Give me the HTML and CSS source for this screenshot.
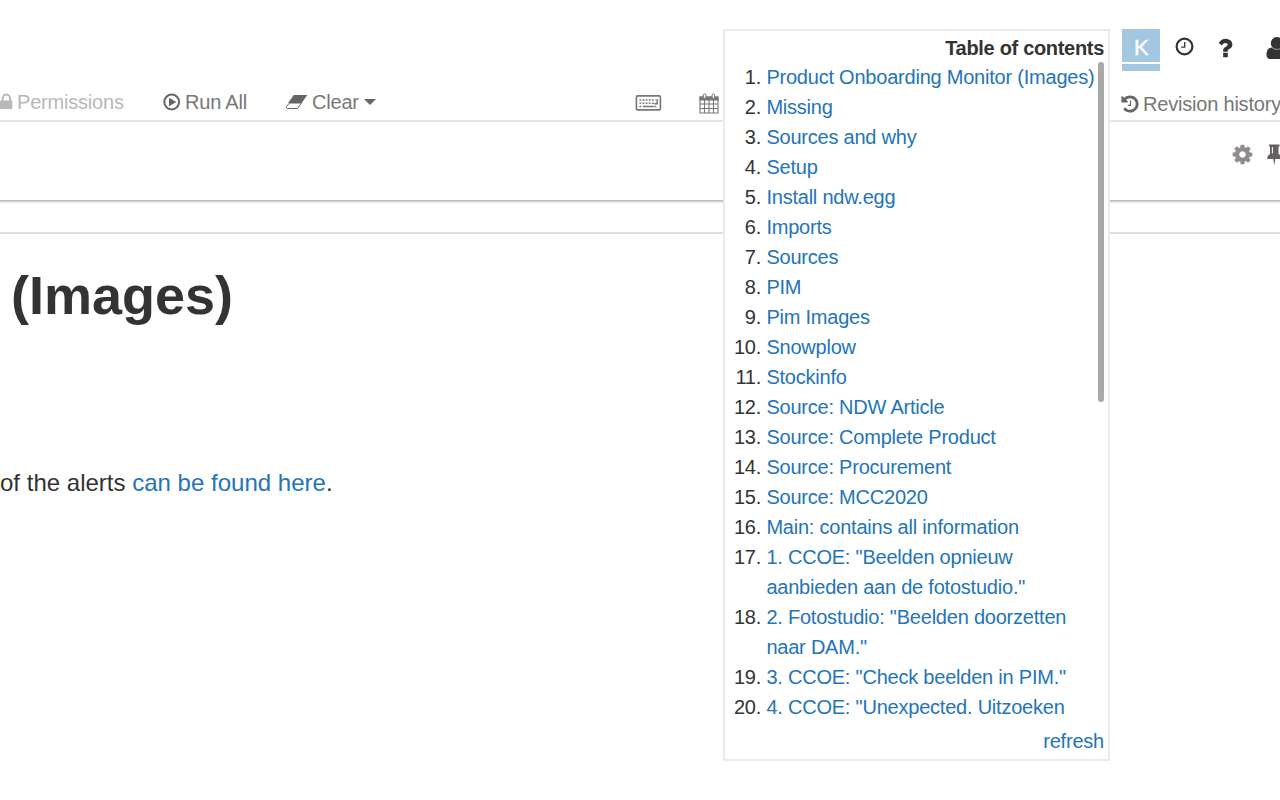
FILE: index.html
```html
<!DOCTYPE html>
<html lang="en">
<head>
<meta charset="utf-8">
<title>Product Onboarding Monitor (Images)</title>
<link rel="stylesheet" href="styles.css">
</head>
<body>
<header class="topbar">
  <div class="avatar"><span class="avatar-letter">K</span><span class="avatar-bar"></span></div>
  <svg class="icon-clock" viewBox="0 0 21 21"><circle cx="10.5" cy="10.5" r="7.900" fill="none" stroke="currentColor" stroke-width="2.200"/><path d="M10.700 6v5.200H7.200" fill="none" stroke="currentColor" stroke-width="1.300"/></svg>
  <svg class="icon-question" viewBox="0 0 1792 1792"><path fill="currentColor" d="M1088 1256v240q0 16-12 28t-28 12h-240q-16 0-28-12t-12-28v-240q0-16 12-28t28-12h240q16 0 28 12t12 28zm316-600q0 54-15.500 101t-35 76.500-55 59.500-57.500 43.500-61 35.500q-41 23-68.500 65t-27.500 67q0 17-12 32.500t-28 15.500h-240q-15 0-25.500-18.500t-10.500-37.500v-45q0-83 65-156.500t143-108.500q59-27 84-56t25-76q0-42-46.500-74t-107.500-32q-65 0-108 29-35 25-107 115-13 16-31 16-12 0-25-8l-164-125q-13-10-15.500-25t5.500-28q160-266 464-266 80 0 161 31t146 83 106 127.500 41 158.500z"/></svg>
  <svg class="icon-user" viewBox="0 0 22 24"><path fill="currentColor" d="M11 1a6 6.200 0 0 1 4.300 10.600c3.800-.2 5.700 3.400 5.700 7.400 0 2.200-1.400 4-3.400 4H3.900C1.900 23 .5 21.200.5 19c0-4 1.500-7.900 6.200-7.400A6 6.200 0 0 1 11 1z"/><path d="M5.600 11.300q5.400 4.300 10.800 0" fill="none" stroke="#fff" stroke-width=".5"/></svg>
</header>
<nav class="toolbar">
  <span class="tool tool-permissions"><svg class="icon-lock" viewBox="0 0 13 17"><path d="M2.600 8V5.200a3.700 3.700 0 0 1 7.400 0V8" fill="none" stroke="currentColor" stroke-width="2"/><rect x="0" y="7.500" width="12.300" height="8.500" rx="1" fill="currentColor"/></svg>Permissions</span>
  <span class="tool tool-run"><svg class="icon-run" viewBox="0 0 18 18"><circle cx="8.700" cy="9" r="7.400" fill="none" stroke="currentColor" stroke-width="2"/><path d="M6 4.800l7.300 4.200L6 13.200z" fill="currentColor"/></svg>Run All</span>
  <span class="tool tool-clear"><svg class="icon-eraser" viewBox="0 0 22 16"><path d="M7.500 1H21l-5.600 8H1.800z" fill="currentColor" transform="translate(.3 0)"/><path d="M3.500 9h12l-4 5.500H1.200q-1.300-.4-.6-2z" fill="none" stroke="currentColor" stroke-width="1"/></svg>Clear<span class="caret"></span></span>
  <svg class="icon-keyboard" viewBox="0 0 26 16"><rect x=".9" y=".9" width="24" height="14" rx="1" fill="none" stroke="currentColor" stroke-width="1.600"/><path d="M4 5h16M4 8.200h15M4 11.500h2M19 11.500h2" stroke="currentColor" stroke-width="1.600" stroke-dasharray="1.800 1.300"/><path d="M7.500 11.500h11M21.700 4v4.700h-3" fill="none" stroke="currentColor" stroke-width="1.500"/></svg>
  <svg class="icon-calendar" viewBox="0 0 20 21"><path d="M1 4h18v16H1zM1 11h18M1 15.500h18M5.500 7v13M10 7v13M14.500 7v13" fill="none" stroke="currentColor" stroke-width="1.100"/><path d="M.5 3.500h19v4H.5z" fill="currentColor"/><path d="M4.300 1.600q1.300-1.500 2.600 0v3.700H4.300zM13.100 1.600q1.300-1.500 2.600 0v3.700h-2.600z" fill="#fff" stroke="currentColor" stroke-width="1"/></svg>
  <span class="tool tool-history"><svg class="icon-history" viewBox="0 0 1792 1792"><path fill="currentColor" d="M1664 896q0 156-61 298t-164 245-245 164-298 61q-172 0-327-72.500t-264-204.500q-7-10-6.500-22.500t8.500-20.500l137-138q10-9 25-9 16 2 23 12 73 95 179 147t225 52q104 0 198.500-40.500t163.500-109.500 109.500-163.500 40.500-198.500-40.500-198.500-109.500-163.500-163.500-109.500-198.500-40.500q-98 0-188 35.500t-160 101.500l137 138q31 30 14 69-17 40-59 40h-448q-26 0-45-19t-19-45v-448q0-42 40-59 39-17 69 14l130 129q107-101 244.500-156.500t284.500-55.500q156 0 298 61t245 164 164 245 61 298z"/><path d="M940 590v430H700" fill="none" stroke="currentColor" stroke-width="100"/></svg>Revision history</span>
</nav>
<div class="subbar">
  <svg class="icon-cog" viewBox="0 0 1792 1792"><path fill="currentColor" d="M1152 896q0-106-75-181t-181-75-181 75-75 181 75 181 181 75 181-75 75-181zm512-109v222q0 12-8 23t-20 13l-185 28q-19 54-39 91 35 50 107 138 10 12 10 25t-9 23q-27 37-99 108t-94 71q-12 0-26-9l-138-108q-44 23-91 38-16 136-29 186-7 28-36 28h-222q-14 0-24.500-8.500t-11.500-21.500l-28-184q-49-16-90-37l-141 107q-10 9-25 9-14 0-25-11-126-114-165-168-7-10-7-23 0-12 8-23 15-21 51-66.500t54-70.500q-27-50-41-99l-183-27q-13-2-21-12.500t-8-23.500v-222q0-12 8-23t19-13l186-28q14-46 39-92-40-57-107-138-10-12-10-24 0-10 9-23 26-36 98.500-107.500t94.500-71.500q13 0 26 10l138 107q44-23 91-38 16-136 29-186 7-28 36-28h222q14 0 24.500 8.500t11.500 21.500l28 184q49 16 90 37l142-107q9-9 24-9 13 0 25 10 129 119 165 170 7 8 7 22 0 12-8 23-15 21-51 66.500t-54 70.500q26 50 41 98l183 28q13 2 21 12.500t8 23.500z"/></svg>
  <svg class="icon-pin" viewBox="0 0 14 22"><path fill="currentColor" d="M2 .5h10.500v2H11.500v7.500q3 1.500 3 5H8.300L7.300 21.500 6.300 15H.2q0-3.500 2.800-5V2.500H2z"/><path d="M5.400 3v6.500" stroke="#fff" stroke-width="1"/></svg>
</div>
<main class="notebook">
  <h1 class="title">(Images)</h1>
  <p class="text">of the alerts <a class="link">can be found here</a>.</p>
</main>
<aside class="toc">
  <div class="toc-title">Table of contents</div>
  <div class="toc-body">
    <ol class="toc-list">
      <li><a class="link">Product Onboarding Monitor (Images)</a></li>
      <li><a class="link">Missing</a></li>
      <li><a class="link">Sources and why</a></li>
      <li><a class="link">Setup</a></li>
      <li><a class="link">Install ndw.egg</a></li>
      <li><a class="link">Imports</a></li>
      <li><a class="link">Sources</a></li>
      <li><a class="link">PIM</a></li>
      <li><a class="link">Pim Images</a></li>
      <li><a class="link">Snowplow</a></li>
      <li><a class="link">Stockinfo</a></li>
      <li><a class="link">Source: NDW Article</a></li>
      <li><a class="link">Source: Complete Product</a></li>
      <li><a class="link">Source: Procurement</a></li>
      <li><a class="link">Source: MCC2020</a></li>
      <li><a class="link">Main: contains all information</a></li>
      <li><a class="link">1. CCOE: "Beelden opnieuw<br>aanbieden aan de fotostudio."</a></li>
      <li><a class="link">2. Fotostudio: "Beelden doorzetten<br>naar DAM."</a></li>
      <li><a class="link">3. CCOE: "Check beelden in PIM."</a></li>
      <li><a class="link">4. CCOE: "Unexpected. Uitzoeken</a></li>
    </ol>
    <div class="scroll-thumb"></div>
  </div>
  <div class="toc-footer"><a class="link">refresh</a></div>
</aside>
</body>
</html>
```
FILE: styles.css
```css
* { box-sizing: border-box; }
body {
  margin: 0;
  width: 1280px;
  height: 800px;
  overflow: hidden;
  position: relative;
  background: #fff;
  color: #333;
  font: 20px/30px "Liberation Sans", Arial, sans-serif;
}
svg { display: block; flex: none; }
.link { color: #2474b9; }

.topbar {
  display: flex;
  align-items: flex-start;
  height: 84px;
  padding: 29px 0 0 1122px;
}
.avatar {
  display: flex;
  flex: none;
  flex-direction: column;
  gap: 2px;
  width: 38px;
  color: #fff;
  font: 22px/35px Lato, sans-serif;
  -webkit-text-stroke: 0.4px #fff;
  text-align: center;
}
.avatar-letter { height: 33px; background: #a3c7e0; }
.avatar-bar { height: 7px; background: #a3c7e0; }
.icon-clock { width: 21px; height: 21px; margin: 7px 0 0 14px; }
.icon-question { width: 26px; height: 26px; margin: 6px 0 0 17px; }
.icon-user { width: 22px; height: 24px; margin: 7px 0 0 28px; }

.toolbar {
  display: flex;
  align-items: flex-start;
  height: 38px;
  border-bottom: 2px solid #e7e7e7;
  color: #777;
  letter-spacing: -0.2px;
  white-space: nowrap;
}
.tool { display: flex; flex: none; align-items: flex-start; margin-top: 3px; }
.tool-permissions { width: 162px; color: #b8b8b8; }
.tool-run { width: 124px; }
.tool-clear { width: 349px; }
.tool-history { margin: 5px 0 0 401px; letter-spacing: -0.2px; }
.icon-lock { width: 13px; height: 17px; margin: 6px 4px 0 0; }
.icon-run { width: 18px; height: 18px; margin: 6px 4px 0 1px; color: #666; }
.icon-eraser { width: 22px; height: 16px; margin: 7px 4px 0 0; color: #666; }
.caret {
  margin: 12px 0 0 5px;
  border: 6px solid transparent;
  border-top: 6px solid #666;
  border-bottom: 0;
}
.icon-keyboard { width: 27px; height: 16px; margin-top: 11px; }
.icon-calendar { width: 20px; height: 21px; margin: 9px 0 0 37px; }
.icon-history { width: 20px; height: 20px; margin: 5px 3px 0 0; color: #666; }

.subbar {
  display: flex;
  align-items: flex-start;
  height: 79px;
  padding: 21px 0 0 1230px;
  border-bottom: 1px solid #bcbcbc;
  box-shadow: 0 1px 2px rgba(0, 0, 0, .25);
}
.icon-cog { width: 23px; height: 23px; margin: 0 0 0 1px; color: #918b8b; }
.icon-pin { width: 14px; height: 22px; margin: 1px 0 0 13px; color: #665f5f; }

.notebook { margin-top: 31px; border-top: 2px solid #dedede; }
.title {
  margin: 30px 0 0 11px;
  font-size: 54px;
  line-height: 62px;
}
.text { margin: 141px 0 0; font-size: 24px; line-height: 32px; letter-spacing: 0.01px; }

.toc {
  position: absolute;
  left: 723px;
  top: 29px;
  width: 387px;
  height: 732px;
  border: 2px solid #ebebeb;
  background: #fff;
  letter-spacing: -0.22px;
}
.toc-title {
  height: 31px;
  padding: 2px 4px 0 0;
  font-weight: bold;
  letter-spacing: -0.31px;
  text-align: right;
}
.toc-body { display: flex; justify-content: space-between; height: 660px; }
.toc-list { width: 370px; margin: 0; padding-left: 41.4px; white-space: nowrap; }
.scroll-thumb {
  width: 6px;
  height: 340px;
  margin-right: 4px;
  border-radius: 3px;
  background: #a9a9a9;
}
.toc-footer { padding: 4px 4px 0 0; text-align: right; }
```
